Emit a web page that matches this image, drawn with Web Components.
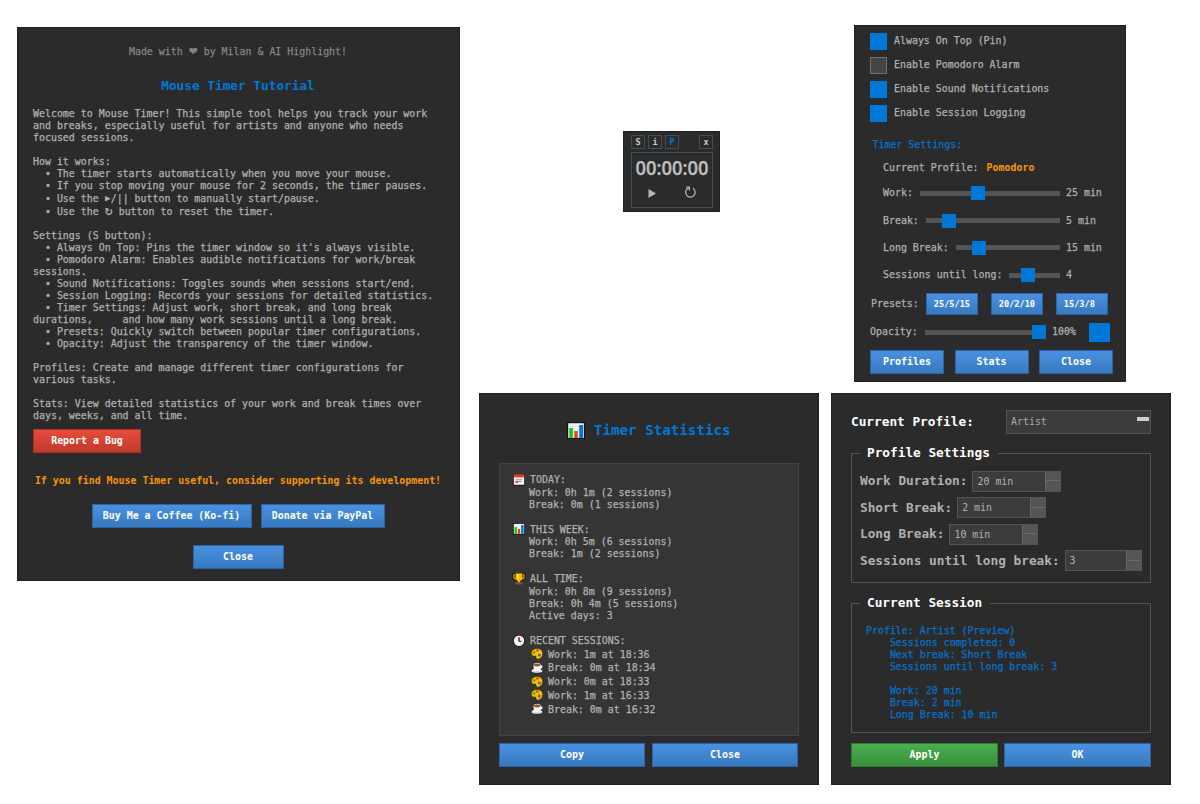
<!DOCTYPE html>
<html lang="en">

<head>
    <meta charset="UTF-8">
    <meta name="viewport" content="width=device-width, initial-scale=1.0">
    <title>Mouse Timer</title>
    <style>
        body {
            margin: 0;
            width: 1200px;
            height: 804px;
            position: relative;
            overflow: hidden;
            background: #fff;
            color: #b0b0b0;
            font: 9.94px/12px "DejaVu Sans Mono", "Liberation Mono", monospace;
            -webkit-text-stroke: .25px;
        }

        tool-window {
            position: absolute;
        }
    </style>
    <script>
        // Small base: every element clones its own markup into an open root
        const define = (name, html, setup) => {
            const template = document.createElement("template");
            // no blank text between tags, white-space: pre would draw it
            template.innerHTML = html.trim().replace(/>\s+</g, "><");
            customElements.define(name,
                class extends HTMLElement {
                    constructor() {
                        super();
                        this.attachShadow({ mode: "open" }).appendChild(template.content.cloneNode(true));
                    }

                    connectedCallback() {
                        if (setup) {
                            setup(this, this.shadowRoot);
                        }
                    }
                });
        };

        const icons = {
            chart: `<rect x="0" y="0" width="18" height="17" rx="1" fill="#111"/><path d="M1.2 1.2h15.6v14.8H1.2z" fill="#f4f4f4"/><path d="M1 4.5h16M1 8h16M6 1v15M11.5 1v15" stroke="#ddd" stroke-width=".7"/><path d="M2.3 6h3.6v10H2.3z" fill="#16c60c"/><path d="M7.3 9h3.4v7H7.3z" fill="#f03a17"/><path d="M12.2 3h3.8v13h-3.8z" fill="#0078d7"/>`,
            calendar: `<rect x="0" y="0" width="18" height="17" rx="1" fill="#111"/><path d="M1.2 1h15.6v15H1.2z" fill="#f2f2f2"/><path d="M1.2 1h15.6v4H1.2z" fill="#f03a17"/><path d="M4 8.5h10M4 11h9" stroke="#999" stroke-width="1.6"/><path d="M3.5 11h4v2.3h-4z" fill="#f03a17"/>`,
            trophy: `<path d="M3 2H1v4c0 3 2 4 4 4M15 2h2v4c0 3-2 4-4 4" fill="none" stroke="#111" stroke-width="3.4"/><path d="M3 2.5H1.4v3.3c0 2.5 2 3.2 4 3.2M15 2.5h1.6v3.3c0 2.5-2 3.2-4 3.2" fill="none" stroke="#ffb900" stroke-width="1.6"/><path d="M4 .5h10v7c0 3-2 4-3.6 4.4V14H7.6v-2.1C6 11.5 4 10.5 4 7.5z" fill="#ffb900"/><path d="M6 1.5h2v7H7z" fill="#fff0a0"/><path d="M4 14h10v3H4z" fill="#8e562e"/>`,
            clock: `<circle cx="9" cy="8.5" r="8.9" fill="#111"/><circle cx="9" cy="8.5" r="7.8" fill="#f5f5f5"/><path d="M9 3.5v5.8h3.8" fill="none" stroke="#111" stroke-width="1.5"/><path d="M9 3.500v5.500" stroke="#e81224" stroke-width="2"/>`,
            palette: `<path d="M9 .6C4 .6.4 3.8.4 7.2s2.400 5.300 5.200 4.800c1.800-.3 2 .8 1.900 2.200-.2 2 2.500 3 4.700 2 3.300-1.400 5.400-4.200 5.400-8.200C17.600 3.600 14 .6 9 .6z" fill="#ffb900" stroke="#111" stroke-width=".7"/><ellipse cx="9.500" cy="3.500" rx="2.500" ry="1.500" fill="#f03a17"/><circle cx="4.500" cy="6.500" r="1.900" fill="#16c60c"/><circle cx="12.500" cy="10.500" r="2.300" fill="#3a70d8"/>`,
            coffee: `<path d="M3 4.500C3 2 5.600.6 9.200.6s6.300 1.400 6.300 3.900c2 0 2.600 1.600 2 3.500-.4 1.600-1.700 2.400-2.800 2.600l2.800 1.200v2.200c-1.500 3.400-15.500 3.400-17 0v-2.200L3.600 10z" fill="#f4f4f4" stroke="#111" stroke-width=".9"/><ellipse cx="9.200" cy="4.400" rx="5" ry="2.200" fill="#8e562e"/><path d="M2.500 13.300c3 1.400 10 1.400 13 0" fill="none" stroke="#c4c4c4"/>`
        };

        define("tool-window", `
            <style>
                :host {
                    display: flex;
                    flex-direction: column;
                    box-sizing: border-box;
                    background: #2b2b2b;
                    outline: 1px solid #202020;
                    outline-offset: -1px;
                }
            </style>
            <slot></slot>`);

        define("tool-row", `
            <style>
                :host {
                    display: flex;
                    align-items: center;
                    flex-shrink: 0;
                    white-space: pre;
                }
            </style>
            <slot></slot>`);

        define("text-line", `
            <style>
                :host {
                    display: block;
                    height: 12px;
                    line-height: 12px;
                    flex-shrink: 0;
                    white-space: pre;
                }

                :host([tall]) {
                    height: 13.7px;
                    line-height: 14.4px;
                }

                :host([bold]) {
                    font-weight: bold;
                    -webkit-text-stroke: 0;
                }

                :host([center]) {
                    text-align: center;
                }
            </style>
            <slot></slot>`);

        define("flat-button", `
            <style>
                :host {
                    display: flex;
                    align-items: center;
                    justify-content: center;
                    box-sizing: border-box;
                    flex-shrink: 0;
                    height: 24px;
                    border: 1px solid #2d62a8;
                    background: linear-gradient(#4a90e2, #357abd);
                    color: #fff;
                    font-weight: bold;
                    white-space: pre;
                    -webkit-text-stroke: 0;
                }

                :host([kind="red"]) {
                    border-color: #a93226;
                    background: linear-gradient(#e74c3c, #c0392b);
                }

                :host([kind="green"]) {
                    border-color: #2e7d32;
                    background: linear-gradient(#4caf50, #388e3c);
                }

                :host([kind="preset"]) {
                    width: 52px;
                    height: 22px;
                    justify-content: flex-start;
                    padding-left: 7px;
                    font-size: 8.6px;
                }
            </style>
            <slot></slot>`);

        define("check-row", `
            <style>
                :host {
                    display: flex;
                    align-items: center;
                    gap: 7px;
                    height: 24px;
                    flex-shrink: 0;
                }

                i {
                    box-sizing: border-box;
                    width: 17px;
                    height: 17px;
                    background: #444;
                    border: 1px solid #707070;
                }

                :host([checked]) i {
                    background: #0078d7;
                    border-color: #0078d7;
                }
            </style>
            <i></i><slot></slot>`);

        define("slide-bar", `
            <style>
                :host {
                    display: flex;
                    align-items: center;
                    height: 14px;
                    background: linear-gradient(#555, #555) center / 100% 5px no-repeat;
                }

                i {
                    width: 14px;
                    height: 14px;
                    background: #0078d7;
                }
            </style>
            <i></i>`, (host, root) => {
            host.style.width = host.getAttribute("width") + "px";
            root.querySelector("i").style.marginLeft = host.getAttribute("value") + "px";
        });

        define("emoji-icon", `
            <style>
                :host {
                    display: inline-block;
                    width: 12px;
                    height: 11.5px;
                    vertical-align: -2px;
                }

                svg {
                    display: block;
                    width: 100%;
                    height: 100%;
                    overflow: visible;
                }
            </style>
            <svg viewBox="0 0 18 17"></svg>`, (host, root) => {
            root.querySelector("svg").innerHTML = icons[host.getAttribute("name")];
        });

        define("spin-box", `
            <style>
                :host {
                    display: flex;
                    box-sizing: border-box;
                    width: 89px;
                    height: 21px;
                    border: 1px solid #555;
                    background: #3c3c3c;
                    font-weight: normal;
                    font-size: 9.93px;
                    line-height: 19px;
                }

                span {
                    flex: 1;
                    padding-left: 4px;
                }

                div {
                    display: grid;
                    grid-template-rows: 1fr 1fr;
                    width: 14px;
                    border-left: 1px solid #666;
                    background: #555;
                }

                i:first-child {
                    border-bottom: 1px solid #6a6a6a;
                }
            </style>
            <span><slot></slot></span>
            <div><i></i><i></i></div>`);

        define("group-frame", `
            <style>
                :host {
                    display: block;
                    flex-shrink: 0;
                }

                fieldset {
                    box-sizing: border-box;
                    height: 100%;
                    min-width: 0;
                    margin: 0;
                    padding: 0 0 0 8px;
                    border: 1px solid #555;
                }

                legend {
                    height: 14px;
                    margin: 0;
                    padding: 0 8px 0 7px;
                    color: #fff;
                    font-weight: bold;
                    font-size: 12.75px;
                    line-height: 14px;
                    -webkit-text-stroke: 0;
                }
            </style>
            <fieldset>
                <legend></legend>
                <slot></slot>
            </fieldset>`, (host, root) => {
            root.querySelector("legend").textContent = host.getAttribute("label");
        });

        define("combo-box", `
            <style>
                :host {
                    display: flex;
                    justify-content: space-between;
                    box-sizing: border-box;
                    width: 145px;
                    height: 24px;
                    padding: 0 1px 0 4px;
                    border: 1px solid #555;
                    background: #3c3c3c;
                    line-height: 22px;
                }

                i {
                    width: 12px;
                    height: 4px;
                    margin-top: 6px;
                    background: #ccc;
                }
            </style>
            <slot></slot><i></i>`);

        define("mini-timer", `
            <style>
                :host {
                    display: block;
                    padding: 4px 7px 0 8px;
                }

                header {
                    display: flex;
                    gap: 3px;
                    height: 14px;
                }

                b {
                    box-sizing: border-box;
                    width: 14px;
                    height: 14px;
                    border: 1px solid #3d4f5a;
                    color: #ccc;
                    font-size: 8.5px;
                    line-height: 12px;
                    text-align: center;
                    -webkit-text-stroke: 0;
                }

                b:nth-child(3) {
                    color: #0078d7;
                }

                b:last-child {
                    margin-left: auto;
                }

                main {
                    box-sizing: border-box;
                    height: 56px;
                    margin-top: 3px;
                    border: 1px solid #3d4f5a;
                }

                .time {
                    width: 90px;
                    height: 30px;
                    color: #c0c0c0;
                    font: 600 19.5px/30px "Open Sans", sans-serif;
                    text-align: center;
                    transform: scaleX(.94);
                    transform-origin: 45px 0;
                    margin-left: -5px;
                    white-space: nowrap;
                }

                .controls {
                    display: flex;
                    justify-content: space-between;
                    padding: 2px 15px 0 15px;
                }
            </style>
            <header><b>S</b><b>i</b><b>P</b><b>x</b></header>
            <main>
                <div class="time">00:00:00</div>
                <div class="controls">
                    <svg width="10" height="14"><path d="M1.500 4l7.500 4.500-7.500 4.500z" fill="#b8b8b8"/></svg>
                    <svg width="13" height="14"><path d="M9 3.300A4.800 4.800 0 1 1 4.600 2.900M2 2h3.400v3.600" fill="none" stroke="#b8b8b8" stroke-width="1.200"/></svg>
                </div>
            </main>`);

        define("inline-glyph", `
            <style>
                :host {
                    display: inline-flex;
                    justify-content: center;
                    height: 10px;
                    line-height: 10px;
                }
            </style>
            <slot></slot>`);
    </script>
    <style>
        .body {
            margin: 16.5px 0 7.5px 16px;
        }

        .heading {
            font-size: 12.75px;
        }

        .slider {
            height: 27.4px;
            padding-left: 13px;
        }

        .slider slide-bar,
        .opacity slide-bar {
            margin: 0 6px 0 auto;
        }

        .slider span {
            width: 47px;
        }

        .panel {
            height: 273px;
            box-sizing: border-box;
            margin: 0 20px 7px 20.5px;
            padding: 9px 13px;
            border: 1px solid #444;
            background: #353535;
        }

        .panel span {
            margin-left: 5px;
        }

        .sub {
            padding-left: 16px;
        }

        .recent {
            padding-left: 18px;
        }

        .spin {
            height: 26.5px;
            font-size: 12.75px;
            font-weight: bold;
            gap: 5px;
            -webkit-text-stroke: 0;
        }
    </style>
</head>

<body>
    <tool-window style="left: 17px; top: 27px; width: 443px; height: 554px; padding: 18px 1px 0 0">
        <text-line center style="color: #858585">Made with <inline-glyph style="width: 9px; font-size: 14px">❤</inline-glyph> by Milan &amp; AI Highlight!</text-line>
        <text-line center bold class="heading" style="color: #0078d7; margin-top: 22.5px">Mouse Timer Tutorial</text-line>
        <div class="body">
            <text-line>Welcome to Mouse Timer! This simple tool helps you track your work</text-line>
            <text-line>and breaks, especially useful for artists and anyone who needs</text-line>
            <text-line>focused sessions.</text-line>
            <text-line></text-line>
            <text-line>How it works:</text-line>
            <text-line>  • The timer starts automatically when you move your mouse.</text-line>
            <text-line>  • If you stop moving your mouse for 2 seconds, the timer pauses.</text-line>
            <text-line tall>  • Use the <inline-glyph style="width: 6px; font-size: 13px">▸</inline-glyph>/|| button to manually start/pause.</text-line>
            <text-line>  • Use the <inline-glyph style="width: 8px; font-size: 13px">↻</inline-glyph> button to reset the timer.</text-line>
            <text-line></text-line>
            <text-line>Settings (S button):</text-line>
            <text-line>  • Always On Top: Pins the timer window so it's always visible.</text-line>
            <text-line>  • Pomodoro Alarm: Enables audible notifications for work/break</text-line>
            <text-line>sessions.</text-line>
            <text-line>  • Sound Notifications: Toggles sounds when sessions start/end.</text-line>
            <text-line>  • Session Logging: Records your sessions for detailed statistics.</text-line>
            <text-line>  • Timer Settings: Adjust work, short break, and long break</text-line>
            <text-line>durations,     and how many work sessions until a long break.</text-line>
            <text-line>  • Presets: Quickly switch between popular timer configurations.</text-line>
            <text-line>  • Opacity: Adjust the transparency of the timer window.</text-line>
            <text-line></text-line>
            <text-line>Profiles: Create and manage different timer configurations for</text-line>
            <text-line>various tasks.</text-line>
            <text-line></text-line>
            <text-line>Stats: View detailed statistics of your work and break times over</text-line>
            <text-line>days, weeks, and all time.</text-line>
        </div>
        <flat-button kind="red" style="width: 108px; margin-left: 16px">Report a Bug</flat-button>
        <text-line center bold style="color: #f79409; margin-top: 22px">If you find Mouse Timer useful, consider supporting its development!</text-line>
        <tool-row style="justify-content: center; gap: 9px; margin-top: 17px">
            <flat-button style="width: 160px">Buy Me a Coffee (Ko-fi)</flat-button>
            <flat-button style="width: 124px">Donate via PayPal</flat-button>
        </tool-row>
        <flat-button style="width: 91px; margin: 17px auto 0">Close</flat-button>
    </tool-window>

    <tool-window style="left: 623px; top: 131px; width: 97px; height: 81px">
        <mini-timer></mini-timer>
    </tool-window>

    <tool-window style="left: 854px; top: 25px; width: 272px; height: 357px; padding: 4px 13px 0 16px">
        <check-row checked>Always On Top (Pin)</check-row>
        <check-row>Enable Pomodoro Alarm</check-row>
        <check-row checked>Enable Sound Notifications</check-row>
        <check-row checked>Enable Session Logging</check-row>
        <text-line style="color: #0672c8; margin: 14px 0 0 2.5px">Timer Settings:</text-line>
        <tool-row style="padding-left: 13px; margin-top: 11px; height: 12px; gap: 8px">Current Profile:<b style="color: #f79409; -webkit-text-stroke: 0">Pomodoro</b></tool-row>
        <tool-row class="slider" style="margin-top: 5.5px">Work:<slide-bar width="140" value="51"></slide-bar><span>25 min</span></tool-row>
        <tool-row class="slider">Break:<slide-bar width="134" value="16"></slide-bar><span>5 min</span></tool-row>
        <tool-row class="slider">Long Break:<slide-bar width="104" value="16"></slide-bar><span>15 min</span></tool-row>
        <tool-row class="slider">Sessions until long:<slide-bar width="51" value="12"></slide-bar><span>4</span></tool-row>
        <tool-row style="height: 22px; margin: 3.5px 5px 0 1px; gap: 13px">Presets:<flat-button kind="preset" style="margin-left: -6px">25/5/15</flat-button><flat-button kind="preset">20/2/10</flat-button><flat-button kind="preset">15/3/8</flat-button></tool-row>
        <tool-row class="opacity" style="height: 19px; margin-top: 8px; padding-right: 3px">Opacity:<slide-bar width="121" value="107"></slide-bar>100%<i style="width: 21px; height: 19px; margin-left: 13px; background: #0078d7"></i></tool-row>
        <tool-row style="justify-content: space-between; margin-top: 8px">
            <flat-button style="width: 74px">Profiles</flat-button><flat-button style="width: 74px">Stats</flat-button><flat-button style="width: 74px">Close</flat-button>
        </tool-row>
    </tool-window>

    <tool-window style="left: 478.5px; top: 393px; width: 340.5px; height: 391.5px">
        <tool-row style="justify-content: center; height: 20px; margin: 27px 0 23px; gap: 9px; font-size: 14.2px; font-weight: bold; color: #0078d7; -webkit-text-stroke: 0"><emoji-icon name="chart" style="width: 18px; height: 17px"></emoji-icon>Timer Statistics</tool-row>
        <div class="panel">
            <text-line tall><emoji-icon name="calendar"></emoji-icon><span>TODAY:</span></text-line>
            <text-line class="sub">Work: 0h 1m (2 sessions)</text-line>
            <text-line class="sub">Break: 0m (1 sessions)</text-line>
            <text-line></text-line>
            <text-line tall><emoji-icon name="chart"></emoji-icon><span>THIS WEEK:</span></text-line>
            <text-line class="sub">Work: 0h 5m (6 sessions)</text-line>
            <text-line class="sub">Break: 1m (2 sessions)</text-line>
            <text-line></text-line>
            <text-line tall><emoji-icon name="trophy"></emoji-icon><span>ALL TIME:</span></text-line>
            <text-line class="sub">Work: 0h 8m (9 sessions)</text-line>
            <text-line class="sub">Break: 0h 4m (5 sessions)</text-line>
            <text-line class="sub">Active days: 3</text-line>
            <text-line></text-line>
            <text-line tall><emoji-icon name="clock"></emoji-icon><span>RECENT SESSIONS:</span></text-line>
            <text-line tall class="recent"><emoji-icon name="palette"></emoji-icon><span>Work: 1m at 18:36</span></text-line>
            <text-line tall class="recent"><emoji-icon name="coffee"></emoji-icon><span>Break: 0m at 18:34</span></text-line>
            <text-line tall class="recent"><emoji-icon name="palette"></emoji-icon><span>Work: 0m at 18:33</span></text-line>
            <text-line tall class="recent"><emoji-icon name="palette"></emoji-icon><span>Work: 1m at 16:33</span></text-line>
            <text-line tall class="recent"><emoji-icon name="coffee"></emoji-icon><span>Break: 0m at 16:32</span></text-line>
        </div>
        <tool-row style="gap: 7px; padding-left: 20.5px">
            <flat-button style="width: 146px">Copy</flat-button><flat-button style="width: 146px">Close</flat-button>
        </tool-row>
    </tool-window>

    <tool-window style="left: 831px; top: 393px; width: 340px; height: 391.5px; padding: 17px 20px 0">
        <tool-row style="justify-content: space-between; height: 24px; color: #fff; font-size: 12.75px; font-weight: bold; -webkit-text-stroke: 0">Current Profile:<combo-box style="font-size: 9.93px; font-weight: normal; color: #a8a8a8">Artist</combo-box></tool-row>
        <group-frame label="Profile Settings" style="height: 137px; margin-top: 12px">
            <tool-row class="spin" style="margin-top: 8px">Work Duration:<spin-box>20 min</spin-box></tool-row>
            <tool-row class="spin">Short Break:<spin-box>2 min</spin-box></tool-row>
            <tool-row class="spin">Long Break:<spin-box>10 min</spin-box></tool-row>
            <tool-row class="spin">Sessions until long break:<spin-box style="width: 77px">3</spin-box></tool-row>
        </group-frame>
        <group-frame label="Current Session" style="height: 137px; margin: 13px 0 10px; color: #0672c8">
            <div style="padding: 15px 0 0 6px">
                <text-line>Profile: Artist (Preview)</text-line>
                <text-line>    Sessions completed: 0</text-line>
                <text-line>    Next break: Short Break</text-line>
                <text-line>    Sessions until long break: 3</text-line>
                <text-line></text-line>
                <text-line>    Work: 20 min</text-line>
                <text-line>    Break: 2 min</text-line>
                <text-line>    Long Break: 10 min</text-line>
            </div>
        </group-frame>
        <tool-row style="justify-content: space-between">
            <flat-button kind="green" style="width: 147px">Apply</flat-button><flat-button style="width: 147px">OK</flat-button>
        </tool-row>
    </tool-window>
</body>

</html>
